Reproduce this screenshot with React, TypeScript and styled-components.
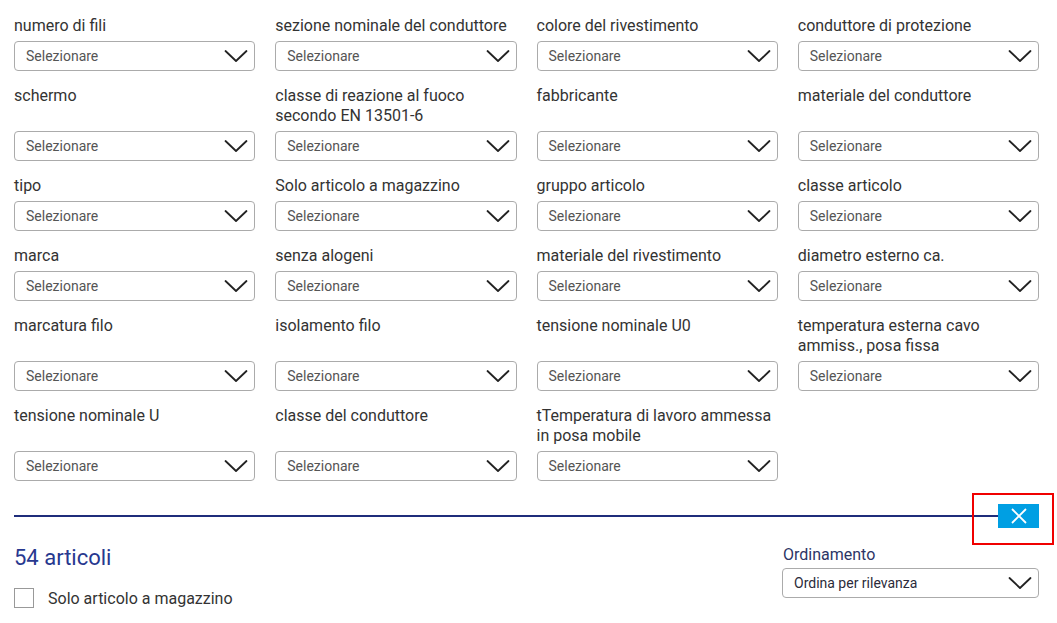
import React from "react";
import styled, { createGlobalStyle } from "styled-components";

const Global = createGlobalStyle`
  html, body { margin: 0; padding: 0; background: #fff; }
  body { font-family: Roboto, "Noto Sans", Arial, sans-serif; }
  * { box-sizing: border-box; }
`;

const Page = styled.div`
  padding: 15px 18px 0 14px;
  width: 1057px;
`;

const FilterGrid = styled.div`
  display: grid;
  grid-template-columns: repeat(4, 1fr);
  column-gap: 20px;
  row-gap: 14px;
`;

const Field = styled.div`
  display: flex;
  flex-direction: column;
  justify-content: space-between;
`;

const Label = styled.div`
  font-size: 16px;
  line-height: 20px;
  color: #333;
  padding-top: 1px;
  margin-bottom: 5px;
`;

const SelectBox = styled.div<{ $dark?: boolean }>`
  height: 30px;
  border: 1px solid #ababab;
  border-radius: 4px;
  display: flex;
  align-items: center;
  justify-content: space-between;
  padding: 0 6px 0 11px;
  font-size: 14px;
  color: ${(p) => (p.$dark ? "#2b2b3a" : "#555")};
  background: #fff;
`;

const Chevron = () => (
  <svg width="24" height="14" viewBox="0 0 24 14" fill="none">
    <path d="M1.5 2 L12 12 L22.5 2" stroke="#222" strokeWidth="1.8" strokeLinecap="round" strokeLinejoin="round" />
  </svg>
);

const DividerRow = styled.div`
  display: flex;
  align-items: center;
  margin-top: 23px;
  height: 24px;
`;

const Line = styled.div`
  flex: 1;
  height: 2px;
  background: #1f2d7b;
`;

const CloseWrap = styled.div`
  position: relative;
`;

const CloseButton = styled.button`
  width: 41px;
  height: 24px;
  border: none;
  background: #009fe3;
  display: flex;
  align-items: center;
  justify-content: center;
  padding: 0;
  cursor: pointer;
`;

const Highlight = styled.div`
  position: absolute;
  left: -26px;
  top: -11px;
  width: 82px;
  height: 52px;
  border: 2px solid #f00000;
  pointer-events: none;
`;

const ResultsRow = styled.div`
  display: flex;
  justify-content: space-between;
  align-items: flex-start;
  margin-top: 16px;
`;

const LeftCol = styled.div`
  display: flex;
  flex-direction: column;
`;

const Count = styled.div`
  font-size: 22px;
  line-height: 28px;
  color: #27388f;
`;

const CheckRow = styled.label`
  display: flex;
  align-items: center;
  gap: 14px;
  margin-top: 16px;
  font-size: 16px;
  color: #333;
`;

const Box = styled.span`
  width: 20px;
  height: 20px;
  border: 1px solid #999;
  background: #fff;
  display: inline-block;
`;

const SortCol = styled.div`
  width: 257px;
  margin-top: 1px;
  display: flex;
  flex-direction: column;
`;

const SortLabel = styled.div`
  font-size: 16px;
  line-height: 20px;
  color: #2c3566;
  margin-bottom: 3px;
  padding-left: 1px;
`;

const filters = [
  "numero di fili",
  "sezione nominale del conduttore",
  "colore del rivestimento",
  "conduttore di protezione",
  "schermo",
  "classe di reazione al fuoco secondo EN 13501-6",
  "fabbricante",
  "materiale del conduttore",
  "tipo",
  "Solo articolo a magazzino",
  "gruppo articolo",
  "classe articolo",
  "marca",
  "senza alogeni",
  "materiale del rivestimento",
  "diametro esterno ca.",
  "marcatura filo",
  "isolamento filo",
  "tensione nominale U0",
  "temperatura esterna cavo ammiss., posa fissa",
  "tensione nominale U",
  "classe del conduttore",
  "tTemperatura di lavoro ammessa in posa mobile",
];

export default function App() {
  return (
    <>
      <Global />
      <Page>
        <FilterGrid>
          {filters.map((f) => (
            <Field key={f}>
              <Label>{f}</Label>
              <SelectBox>
                <span>Selezionare</span>
                <Chevron />
              </SelectBox>
            </Field>
          ))}
        </FilterGrid>
        <DividerRow>
          <Line />
          <CloseWrap>
            <CloseButton aria-label="Chiudi">
              <svg width="18" height="18" viewBox="0 0 18 18">
                <path d="M2 2 L16 16 M16 2 L2 16" stroke="#fff" strokeWidth="1.8" />
              </svg>
            </CloseButton>
            <Highlight />
          </CloseWrap>
        </DividerRow>
        <ResultsRow>
          <LeftCol>
            <Count>54 articoli</Count>
            <CheckRow>
              <Box />
              Solo articolo a magazzino
            </CheckRow>
          </LeftCol>
          <SortCol>
            <SortLabel>Ordinamento</SortLabel>
            <SelectBox $dark>
              <span>Ordina per rilevanza</span>
              <Chevron />
            </SelectBox>
          </SortCol>
        </ResultsRow>
      </Page>
    </>
  );
}
